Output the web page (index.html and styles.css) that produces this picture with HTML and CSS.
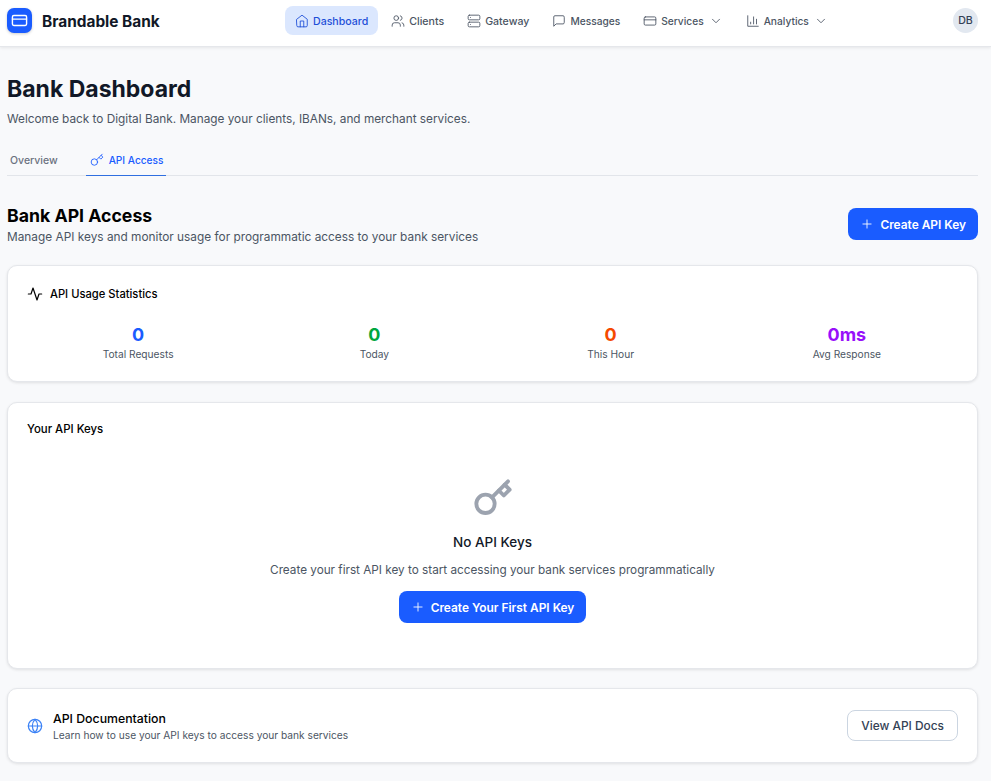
FILE: index.html
```html
<!DOCTYPE html>
<html lang="en">
<head>
<meta charset="utf-8">
<title>Bank Dashboard</title>
<link rel="stylesheet" href="styles.css">
</head>
<body>
<header class="topbar">
  <div class="brand">
    <span class="brand-logo"><svg class="ic-15" viewBox="0 0 24 24"><rect x="2" y="5" width="20" height="14" rx="2"/><path d="M2 10h20"/></svg></span>
    <span class="brand-name">Brandable Bank</span>
  </div>
  <nav class="nav">
    <a class="nav-item active"><svg class="ic-14" viewBox="0 0 24 24"><path d="m3 9 9-7 9 7v11a2 2 0 0 1-2 2H5a2 2 0 0 1-2-2z"/><path d="M9 22V12h6v10"/></svg><span class="nav-label">Dashboard</span></a>
    <a class="nav-item"><svg class="ic-14" viewBox="0 0 24 24"><path d="M16 21v-2a4 4 0 0 0-4-4H6a4 4 0 0 0-4 4v2"/><circle cx="9" cy="7" r="4"/><path d="M22 21v-2a4 4 0 0 0-3-3.87"/><path d="M16 3.13a4 4 0 0 1 0 7.75"/></svg><span class="nav-label">Clients</span></a>
    <a class="nav-item"><svg class="ic-14" viewBox="0 0 24 24"><rect x="2" y="2" width="20" height="8" rx="2"/><rect x="2" y="14" width="20" height="8" rx="2"/><path d="M6 6h.01M6 18h.01"/></svg><span class="nav-label">Gateway</span></a>
    <a class="nav-item nav-tight"><svg class="ic-14" viewBox="0 0 24 24"><path d="M21 15a2 2 0 0 1-2 2H7l-4 4V5a2 2 0 0 1 2-2h14a2 2 0 0 1 2 2z"/></svg><span class="nav-label">Messages</span></a>
    <a class="nav-item nav-tight"><svg class="ic-14" viewBox="0 0 24 24"><rect x="2" y="5" width="20" height="14" rx="2"/><path d="M2 10h20"/></svg><span class="nav-label">Services</span><svg class="ic-chev" viewBox="0 0 24 24"><path d="m6 9 6 6 6-6"/></svg></a>
    <a class="nav-item nav-tight"><svg class="ic-14" viewBox="0 0 24 24"><path d="M3 3v18h18"/><path d="M18 17V9M13 17V5M8 17v-3"/></svg><span class="nav-label">Analytics</span><svg class="ic-chev" viewBox="0 0 24 24"><path d="m6 9 6 6 6-6"/></svg></a>
  </nav>
  <div class="avatar">DB</div>
</header>

<main class="page">
  <h1 class="page-title">Bank Dashboard</h1>
  <p class="page-sub">Welcome back to Digital Bank. Manage your clients, IBANs, and merchant services.</p>

  <div class="tabs">
    <a class="tab">Overview</a>
    <a class="tab tab-active"><svg class="ic-14" viewBox="0 0 24 24"><circle cx="7.5" cy="15.5" r="5.5"/><path d="m21 2-9.6 9.6"/><path d="m15.5 7.5 3 3L22 7l-3-3"/></svg>API Access</a>
  </div>

  <section class="section-head">
    <div>
      <h2 class="section-title">Bank API Access</h2>
      <p class="section-sub">Manage API keys and monitor usage for programmatic access to your bank services</p>
    </div>
    <button class="btn-primary"><svg class="ic-14" viewBox="0 0 24 24"><path d="M5 12h14M12 5v14"/></svg>Create API Key</button>
  </section>

  <section class="card card-stats">
    <h3 class="card-title"><svg class="ic-16" viewBox="0 0 24 24"><path d="M22 12h-4l-3 9L9 3l-3 9H2"/></svg>API Usage Statistics</h3>
    <div class="stats">
      <div class="stat"><div class="stat-val blue">0</div><div class="stat-label">Total Requests</div></div>
      <div class="stat"><div class="stat-val green">0</div><div class="stat-label">Today</div></div>
      <div class="stat"><div class="stat-val orange">0</div><div class="stat-label">This Hour</div></div>
      <div class="stat"><div class="stat-val purple">0ms</div><div class="stat-label">Avg Response</div></div>
    </div>
  </section>

  <section class="card card-keys">
    <h3 class="card-title">Your API Keys</h3>
    <div class="empty">
      <svg class="ic-key" viewBox="0 0 24 24"><circle cx="7.5" cy="15.5" r="5.5"/><path d="m21 2-9.6 9.6"/><path d="m15.5 7.5 3 3L22 7l-3-3"/></svg>
      <h4 class="empty-title">No API Keys</h4>
      <p class="empty-sub">Create your first API key to start accessing your bank services programmatically</p>
      <button class="btn-primary"><svg class="ic-14" viewBox="0 0 24 24"><path d="M5 12h14M12 5v14"/></svg>Create Your First API Key</button>
    </div>
  </section>

  <section class="card card-docs">
    <div class="docs-left">
      <svg class="ic-globe" viewBox="0 0 24 24"><circle cx="12" cy="12" r="10"/><path d="M12 2a14.5 14.5 0 0 0 0 20 14.5 14.5 0 0 0 0-20"/><path d="M2 12h20"/></svg>
      <div class="docs-text">
        <div class="docs-title">API Documentation</div>
        <div class="docs-sub">Learn how to use your API keys to access your bank services</div>
      </div>
    </div>
    <button class="btn-outline">View API Docs</button>
  </section>
</main>
</body>
</html>
```
FILE: styles.css
```css
* { box-sizing: border-box; }
html, body { margin: 0; padding: 0; }
body {
  background: #f8f9fb;
  color: #111827;
  font-family: Inter, sans-serif;
  font-size: 14px;
  height: 781px;
  overflow: hidden;
}
svg { fill: none; stroke: currentColor; stroke-width: 2; stroke-linecap: round; stroke-linejoin: round; flex: none; display: block; }
.ic-14 { width: 14px; height: 14px; stroke-width: 1.5; }
.ic-15 { width: 17px; height: 17px; }
.ic-16 { width: 16px; height: 16px; stroke-width: 1.8; }
.ic-chev { width: 14px; height: 14px; stroke-width: 1.5; margin-left: 1px; }
.ic-key { width: 40px; height: 40px; color: #9ca3af; stroke-width: 2.3; }
.ic-globe { width: 16px; height: 16px; color: #3b82f6; stroke-width: 1.8; }

.topbar {
  height: 47px;
  background: #fff;
  border-bottom: 1px solid #e5e7eb;
  box-shadow: 0 1px 3px rgba(0,0,0,.08);
  display: flex;
  align-items: center;
  padding: 0 13px 5px 7px;
  position: relative;
}
.brand { display: flex; align-items: center; gap: 10px; width: 278px; }
.brand-logo {
  width: 25px; height: 25px;
  border-radius: 7px;
  background: #1a5cff;
  color: #fff;
  display: flex; align-items: center; justify-content: center;
  box-shadow: 0 1px 3px rgba(0,0,0,.2);
}
.brand-name { font-size: 15.4px; font-weight: 700; color: #111827; padding-top: 1px; }
.nav { display: flex; align-items: center; gap: 3px; flex: 1; }
.nav-item {
  display: flex; align-items: center; gap: 4px;
  height: 29px;
  padding: 0 10px;
  border-radius: 8px;
  font-size: 10.6px;
  font-weight: 500;
  color: #4b5563;
  white-space: nowrap;
}
.nav-tight { font-size: 10.2px; }
.nav-label { padding-top: 1px; }
.nav-item.active { background: #dbe7fe; color: #1e4fd8; }
.avatar {
  width: 25px; height: 25px;
  border-radius: 50%;
  background: #e2e8f0;
  color: #334155;
  font-size: 10.6px;
  font-weight: 500;
  display: flex; align-items: center; justify-content: center;
}

.page { padding: 26px 13px 0 7px; }
.page-title { margin: 0; font-size: 23px; line-height: 33px; font-weight: 700; color: #111827; }
.page-sub { margin: 4px 0 0; font-size: 11.8px; line-height: 18px; color: #4b5563; }

.tabs { display: flex; align-items: stretch; gap: 25px; margin-top: 15px; height: 33px; border-bottom: 1px solid #e2e5ea; }
.tab { display: flex; align-items: center; gap: 5px; padding: 2px 3px 0; font-size: 10.5px; font-weight: 500; color: #6b7280; margin-bottom: -1px; border-bottom: 1px solid transparent; }
.tab-active { color: #1a5cff; border-bottom-color: #2f6fe0; font-size: 10.15px; padding-left: 4px; }

.section-head { display: flex; justify-content: space-between; align-items: flex-start; margin-top: 26px; }
.section-head .btn-primary { margin-top: 6px; }
.section-title { margin: 0; padding-top: 1px; font-size: 17.7px; line-height: 25px; font-weight: 700; color: #000; }
.section-sub { margin: 0; font-size: 11.85px; line-height: 18px; color: #4b5563; }
.btn-primary {
  display: inline-flex; align-items: center; gap: 6px;
  height: 32px;
  padding: 0 12px;
  border: 0;
  border-radius: 8px;
  background: #1a5cff;
  color: #fff;
  font: 600 11.9px Inter, sans-serif;
}
.card {
  background: #fff;
  border: 1px solid #e5e7eb;
  border-radius: 10px;
  box-shadow: 0 1px 3px rgba(0,0,0,.1);
}
.card-stats { height: 117px; margin-top: 19px; padding: 20px 19px 0; }
.card-title { margin: 0; display: flex; align-items: center; gap: 7px; font-size: 11.2px; line-height: 16px; font-weight: 500; color: #000; }
.card-keys .card-title { font-size: 11.4px; }
.stats { display: grid; grid-template-columns: repeat(4, 1fr); margin: 22px -7px 0; }
.stat { text-align: center; }
.stat-val { font-size: 18px; line-height: 22px; font-weight: 700; }
.stat-label { font-size: 10.2px; line-height: 16px; color: #4b5563; }
.blue { color: #1a5cff; }
.green { color: #00a63e; }
.orange { color: #f54900; }
.purple { color: #9810fa; }

.card-keys { height: 267px; margin-top: 20px; padding: 18px 19px 0; }
.empty { display: flex; flex-direction: column; align-items: center; margin-top: 41px; }
.empty-title { margin: 14px 0 0; font-size: 13.5px; line-height: 20px; font-weight: 500; color: #111827; }
.empty-sub { margin: 9px 0 0; font-size: 11.74px; line-height: 18px; color: #4b5563; }
.empty .btn-primary { margin-top: 12px; }

.card-docs { height: 75px; margin-top: 19px; padding: 0 19px; display: flex; align-items: center; justify-content: space-between; }
.docs-left { display: flex; align-items: center; gap: 10px; }
.docs-text { padding-top: 2px; }
.docs-title { font-size: 12.3px; line-height: 17px; font-weight: 500; color: #000; }
.docs-sub { font-size: 10.2px; line-height: 16px; color: #4b5563; }
.btn-outline {
  height: 31px;
  padding: 0 13px;
  background: #fff;
  border: 1px solid #cbd5e1;
  border-radius: 8px;
  color: #334155;
  font: 500 11.9px Inter, sans-serif;
}
```
